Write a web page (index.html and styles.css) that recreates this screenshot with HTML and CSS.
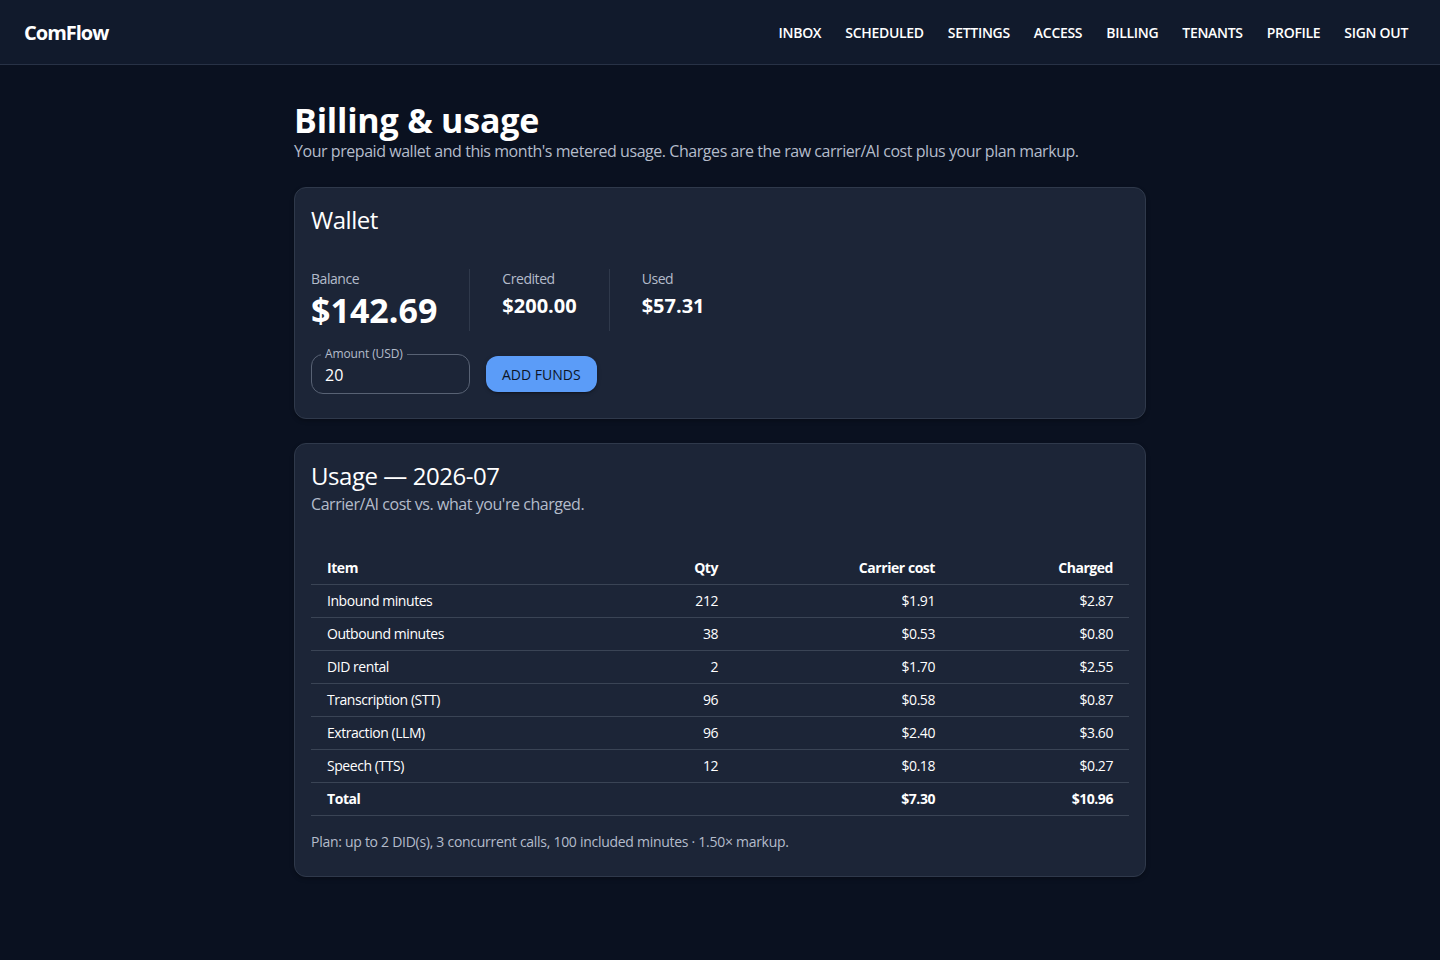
FILE: index.html
```html
<!DOCTYPE html>
<html lang="en">
<head>
  <meta charset="UTF-8" />
  <meta name="viewport" content="width=device-width,initial-scale=1.0" />
  <title>ComFlow – Billing</title>
  <link rel="stylesheet" href="styles.css">
</head>
<body>
  <header class="topbar">
    <div class="brand">ComFlow</div>
    <nav class="nav">
      <a href="#">Inbox</a>
      <a href="#">Scheduled</a>
      <a href="#">Settings</a>
      <a href="#">Access</a>
      <a href="#">Billing</a>
      <a href="#">Tenants</a>
      <a href="#">Profile</a>
      <a href="#">Sign out</a>
    </nav>
  </header>

  <main class="container">
    <h1 class="page-title">Billing &amp; usage</h1>
    <p class="page-sub">Your prepaid wallet and this month's metered usage. Charges are the raw carrier/AI cost plus your plan markup.</p>

    <!-- wallet -->
    <section class="card">
      <h2 class="card-title">Wallet</h2>
      <div class="stats">
        <div class="stat">
          <div class="stat-label">Balance</div>
          <div class="stat-big">$142.69</div>
        </div>
        <div class="divider"></div>
        <div class="stat">
          <div class="stat-label">Credited</div>
          <div class="stat-value">$200.00</div>
        </div>
        <div class="divider"></div>
        <div class="stat">
          <div class="stat-label">Used</div>
          <div class="stat-value">$57.31</div>
        </div>
      </div>
      <div class="fund-row">
        <label class="field">
          <span class="field-label">Amount (USD)</span>
          <input type="text" value="20" />
        </label>
        <button class="btn">Add funds</button>
      </div>
    </section>

    <!-- usage -->
    <section class="card">
      <h2 class="card-title">Usage — 2026-07</h2>
      <p class="card-sub">Carrier/AI cost vs. what you're charged.</p>
      <table class="usage">
        <colgroup>
          <col class="c-item"><col class="c-qty"><col class="c-cost"><col class="c-charge">
        </colgroup>
        <thead>
          <tr><th>Item</th><th class="num">Qty</th><th class="num">Carrier cost</th><th class="num">Charged</th></tr>
        </thead>
        <tbody>
          <tr><td>Inbound minutes</td><td class="num">212</td><td class="num">$1.91</td><td class="num">$2.87</td></tr>
          <tr><td>Outbound minutes</td><td class="num">38</td><td class="num">$0.53</td><td class="num">$0.80</td></tr>
          <tr><td>DID rental</td><td class="num">2</td><td class="num">$1.70</td><td class="num">$2.55</td></tr>
          <tr><td>Transcription (STT)</td><td class="num">96</td><td class="num">$0.58</td><td class="num">$0.87</td></tr>
          <tr><td>Extraction (LLM)</td><td class="num">96</td><td class="num">$2.40</td><td class="num">$3.60</td></tr>
          <tr><td>Speech (TTS)</td><td class="num">12</td><td class="num">$0.18</td><td class="num">$0.27</td></tr>
          <tr class="total"><td>Total</td><td></td><td class="num">$7.30</td><td class="num">$10.96</td></tr>
        </tbody>
      </table>
      <p class="plan-note">Plan: up to 2 DID(s), 3 concurrent calls, 100 included minutes · 1.50× markup.</p>
    </section>
  </main>
</body>
</html>
```

FILE: styles.css
```css
:root{
  --page-bg:#0a1120;
  --bar-bg:#111a2c;
  --card-bg:#1c2537;
  --card-line:#2f394b;
  --rule:#3a4455;
  --text:#ffffff;
  --muted:#b4bccb;
  --primary:#5b9cf8;
  --radius:12px;
}
*{box-sizing:border-box;margin:0;padding:0}
body{font-family:"Open Sans","Noto Sans",Arial,sans-serif;letter-spacing:-.028em;background:var(--page-bg);color:var(--text);min-height:100vh}

/* top bar */
.topbar{height:65px;background:var(--bar-bg);border-bottom:1px solid #283246;display:flex;align-items:center;justify-content:space-between;padding:0 24px}
.brand{font-size:20px;font-weight:700;letter-spacing:-.05em}
.nav{display:flex;gap:8px}
.nav a{color:var(--text);text-decoration:none;text-transform:uppercase;font-size:14px;font-weight:600;padding:6px 8px;letter-spacing:-.3px}

/* page */
.container{max-width:900px;margin:0 auto;padding:32px 24px}
.page-title{font-size:34px;font-weight:700;line-height:1.235;letter-spacing:-.2px;margin:2px 0 -2px}
.page-sub{font-size:16px;line-height:1.5;color:var(--muted);margin-bottom:24px}

.card{background:var(--card-bg);border:1px solid var(--card-line);border-radius:var(--radius);padding:16px 16px 24px;margin-bottom:24px;box-shadow:0 2px 4px rgba(0,0,0,.25)}
.card-title{font-size:24px;font-weight:400;line-height:1.334}
.card-sub{font-size:16px;line-height:1.5;color:var(--muted)}

/* wallet stats */
.stats{display:flex;gap:32px;margin-top:33px}
.divider{width:1px;background:var(--card-line)}
.stat-label{font-size:14px;line-height:20px;color:var(--muted)}
.stat-big{font-size:34px;font-weight:700;line-height:42px;letter-spacing:0}
.stat-value{font-size:20px;font-weight:700;line-height:33px;letter-spacing:0}

.fund-row{display:flex;align-items:center;gap:16px;margin-top:23px}
.field{position:relative;display:block;width:159px;height:40px;border:1px solid #586274;border-radius:var(--radius)}
.field-label{position:absolute;top:-9px;left:9px;padding:0 4px;font-size:12px;line-height:16px;color:var(--muted);background:var(--card-bg);letter-spacing:-.01em}
.field input{width:100%;height:100%;background:none;border:none;outline:none;color:var(--text);font:inherit;font-size:16px;padding:2px 13px 0}
.btn{height:36px;padding:0 16px;border:none;border-radius:var(--radius);background:var(--primary);color:#0d1526;font:inherit;font-size:14px;font-weight:500;letter-spacing:0;text-transform:uppercase;box-shadow:0 3px 1px -2px rgba(0,0,0,.2),0 2px 2px rgba(0,0,0,.14),0 1px 5px rgba(0,0,0,.12);cursor:pointer}

/* usage table */
.usage{width:100%;border-collapse:collapse;margin-top:36px;font-size:14px;table-layout:fixed}
.c-item{width:290px}
.c-qty{width:133px}
.c-cost{width:217px}
.c-charge{width:178px}
.usage th,.usage td{padding:6px 16px;line-height:20px;border-bottom:1px solid var(--rule);text-align:left}
.usage th{font-weight:700}
.usage .num{text-align:right}
.usage .total td{font-weight:700}
.plan-note{margin-top:16px;font-size:14px;line-height:20px;color:var(--muted);letter-spacing:-.02em}
```
